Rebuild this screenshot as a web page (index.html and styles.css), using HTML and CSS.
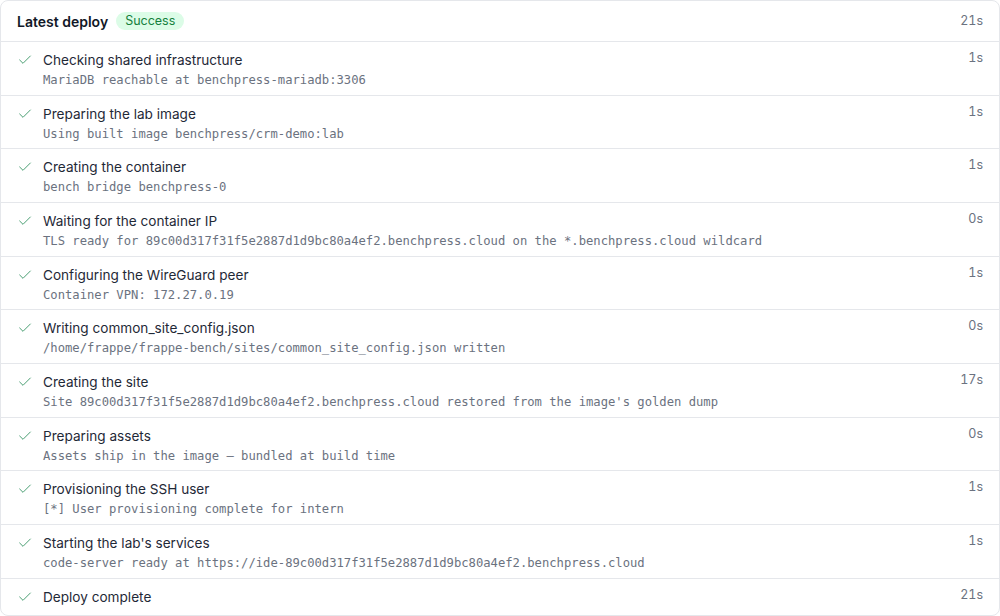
FILE: index.html
```html
<!DOCTYPE html>
<html>
<head>
<meta charset="utf-8">
<link rel="stylesheet" href="styles.css">
</head>
<body>
<div class="card">
  <div class="card-header">
    <div class="header-left">
      <span class="header-title">Latest deploy</span>
      <span class="badge">Success</span>
    </div>
    <span class="duration">21s</span>
  </div>
  <ul class="steps">
    <li class="step">
      <svg class="check" viewBox="0 0 24 24"><polyline points="20 6 9 17 4 12"/></svg>
      <div class="step-body"><div class="step-title">Checking shared infrastructure</div><div class="step-log">MariaDB reachable at benchpress-mariadb:3306</div></div>
      <span class="duration">1s</span>
    </li>
    <li class="step">
      <svg class="check" viewBox="0 0 24 24"><polyline points="20 6 9 17 4 12"/></svg>
      <div class="step-body"><div class="step-title">Preparing the lab image</div><div class="step-log">Using built image benchpress/crm-demo:lab</div></div>
      <span class="duration">1s</span>
    </li>
    <li class="step">
      <svg class="check" viewBox="0 0 24 24"><polyline points="20 6 9 17 4 12"/></svg>
      <div class="step-body"><div class="step-title">Creating the container</div><div class="step-log">bench bridge benchpress-0</div></div>
      <span class="duration">1s</span>
    </li>
    <li class="step">
      <svg class="check" viewBox="0 0 24 24"><polyline points="20 6 9 17 4 12"/></svg>
      <div class="step-body"><div class="step-title">Waiting for the container IP</div><div class="step-log">TLS ready for 89c00d317f31f5e2887d1d9bc80a4ef2.benchpress.cloud on the *.benchpress.cloud wildcard</div></div>
      <span class="duration">0s</span>
    </li>
    <li class="step">
      <svg class="check" viewBox="0 0 24 24"><polyline points="20 6 9 17 4 12"/></svg>
      <div class="step-body"><div class="step-title">Configuring the WireGuard peer</div><div class="step-log">Container VPN: 172.27.0.19</div></div>
      <span class="duration">1s</span>
    </li>
    <li class="step">
      <svg class="check" viewBox="0 0 24 24"><polyline points="20 6 9 17 4 12"/></svg>
      <div class="step-body"><div class="step-title">Writing common_site_config.json</div><div class="step-log">/home/frappe/frappe-bench/sites/common_site_config.json written</div></div>
      <span class="duration">0s</span>
    </li>
    <li class="step">
      <svg class="check" viewBox="0 0 24 24"><polyline points="20 6 9 17 4 12"/></svg>
      <div class="step-body"><div class="step-title">Creating the site</div><div class="step-log">Site 89c00d317f31f5e2887d1d9bc80a4ef2.benchpress.cloud restored from the image's golden dump</div></div>
      <span class="duration">17s</span>
    </li>
    <li class="step">
      <svg class="check" viewBox="0 0 24 24"><polyline points="20 6 9 17 4 12"/></svg>
      <div class="step-body"><div class="step-title">Preparing assets</div><div class="step-log">Assets ship in the image — bundled at build time</div></div>
      <span class="duration">0s</span>
    </li>
    <li class="step">
      <svg class="check" viewBox="0 0 24 24"><polyline points="20 6 9 17 4 12"/></svg>
      <div class="step-body"><div class="step-title">Provisioning the SSH user</div><div class="step-log">[*] User provisioning complete for intern</div></div>
      <span class="duration">1s</span>
    </li>
    <li class="step">
      <svg class="check" viewBox="0 0 24 24"><polyline points="20 6 9 17 4 12"/></svg>
      <div class="step-body"><div class="step-title">Starting the lab's services</div><div class="step-log">code-server ready at https://ide-89c00d317f31f5e2887d1d9bc80a4ef2.benchpress.cloud</div></div>
      <span class="duration">1s</span>
    </li>
    <li class="step">
      <svg class="check" viewBox="0 0 24 24"><polyline points="20 6 9 17 4 12"/></svg>
      <div class="step-body"><div class="step-title">Deploy complete</div></div>
      <span class="duration">21s</span>
    </li>
  </ul>
</div>
</body>
</html>
```
FILE: styles.css
```css
* { box-sizing: border-box; }
html, body { margin: 0; padding: 0; background: #fff; }
body {
  font-family: Inter, "Noto Sans", sans-serif;
  color: #1f2937;
  width: 1000px;
  height: 616px;
  overflow: hidden;
}
.card {
  border: 1px solid #e5e7eb;
  border-radius: 8px;
  height: 616px;
  overflow: hidden;
  background: #fff;
}
.card-header {
  display: flex;
  align-items: center;
  justify-content: space-between;
  height: 41px;
  padding: 0 16px;
  border-bottom: 1px solid #e5e7eb;
}
.header-left { display: flex; align-items: center; gap: 8px; }
.header-title { font-size: 14px; font-weight: 600; color: #111827; }
.badge {
  font-size: 12.5px;
  line-height: 18px;
  padding: 0 9px;
  border-radius: 9999px;
  background: #dcfce7;
  color: #15803d;
}
.duration {
  font-size: 12.5px;
  line-height: 16px;
  color: #6b7280;
  font-variant-numeric: tabular-nums;
}
.steps { list-style: none; margin: 0; padding: 0; }
.step {
  display: flex;
  align-items: flex-start;
  gap: 10px;
  padding: 8px 16px 6px;
  border-bottom: 1px solid #e5e7eb;
}
.step:last-child { border-bottom: none; padding-bottom: 8px; }
.check {
  width: 16px;
  height: 16px;
  margin-top: 2px;
  flex: none;
  fill: none;
  stroke: #4a9f73;
  stroke-width: 1.5;
  stroke-linecap: round;
  stroke-linejoin: round;
}
.step-body { flex: 1; min-width: 0; }
.step-title { font-size: 13.6px; line-height: 20px; color: #1f2937; }
.step-log {
  font-family: "DejaVu Sans Mono", monospace;
  font-size: 12.2px;
  line-height: 16.67px;
  margin-top: 2px;
  color: #6b7280;
  white-space: nowrap;
}
```
